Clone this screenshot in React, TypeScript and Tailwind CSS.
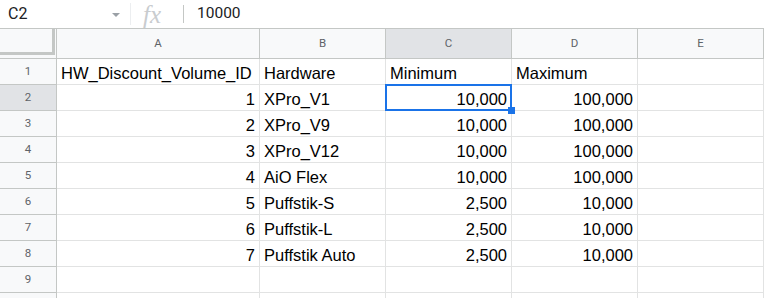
import React from 'react';

const cols = [
  { key: 'A', w: 'w-[203px]' },
  { key: 'B', w: 'w-[126px]' },
  { key: 'C', w: 'w-[126px]' },
  { key: 'D', w: 'w-[126px]' },
  { key: 'E', w: 'w-[126px]' },
];

type Cell = { v: string; num?: boolean };

const rows: Cell[][] = [
  [{ v: 'HW_Discount_Volume_ID' }, { v: 'Hardware' }, { v: 'Minimum' }, { v: 'Maximum' }, { v: '' }],
  [{ v: '1', num: true }, { v: 'XPro_V1' }, { v: '10,000', num: true }, { v: '100,000', num: true }, { v: '' }],
  [{ v: '2', num: true }, { v: 'XPro_V9' }, { v: '10,000', num: true }, { v: '100,000', num: true }, { v: '' }],
  [{ v: '3', num: true }, { v: 'XPro_V12' }, { v: '10,000', num: true }, { v: '100,000', num: true }, { v: '' }],
  [{ v: '4', num: true }, { v: 'AiO Flex' }, { v: '10,000', num: true }, { v: '100,000', num: true }, { v: '' }],
  [{ v: '5', num: true }, { v: 'Puffstik-S' }, { v: '2,500', num: true }, { v: '10,000', num: true }, { v: '' }],
  [{ v: '6', num: true }, { v: 'Puffstik-L' }, { v: '2,500', num: true }, { v: '10,000', num: true }, { v: '' }],
  [{ v: '7', num: true }, { v: 'Puffstik Auto' }, { v: '2,500', num: true }, { v: '10,000', num: true }, { v: '' }],
  [{ v: '' }, { v: '' }, { v: '' }, { v: '' }, { v: '' }],
  [{ v: '' }, { v: '' }, { v: '' }, { v: '' }, { v: '' }],
];

function FormulaBar() {
  return (
    <div className="flex h-[29px] items-center border-b border-[#c4c7c5] bg-white font-['Roboto',sans-serif] text-[#202124]">
      <div className="flex w-[130px] items-center pl-[8px] pr-[10px]">
        <span className="flex-1 text-[16px]">C2</span>
        <svg width="8" height="4" viewBox="0 0 8 4" className="mt-[2px]">
          <path d="M0 0 L8 0 L4 4 Z" fill="#9aa0a6" />
        </svg>
      </div>
      <div className="h-[22px] w-px bg-[#eceef0]" />
      <span className="ml-[12px] w-[28px] font-['Liberation_Serif',serif] text-[25px] italic leading-none text-[#c9cccf]">
        fx
      </span>
      <div className="ml-[12px] h-[18px] w-px bg-[#c4c7c5]" />
      <span className="ml-[13px] text-[15.5px]">10000</span>
    </div>
  );
}

function HeaderRow() {
  return (
    <div className="flex h-[30px] border-b border-[#c4c7c5] bg-[#f8f9fa] font-['Roboto',sans-serif] text-[11.5px] text-[#5f6368]">
      <div className="w-[57px] border-r border-[#c4c7c5]">
        <div className="h-[26px] w-[55px] border-b-[3px] border-r-[3px] border-[#c4c7c5]" />
      </div>
      {cols.map(c => (
        <div
          key={c.key}
          className={`${c.w} flex items-center justify-center border-r border-[#c4c7c5] ${c.key === 'C' ? 'bg-[#e1e3e6]' : ''}`}
        >
          {c.key}
        </div>
      ))}
    </div>
  );
}

export default function App() {
  return (
    <div className="h-[298px] w-[764px] overflow-hidden bg-white">
      <FormulaBar />
      <HeaderRow />
      {rows.map((row, ri) => {
        const selRow = ri === 1;
        return (
          <div key={ri} className="flex h-[26px]">
            <div
              className={`flex w-[57px] items-center justify-center border-b border-r border-[#c4c7c5] font-['Roboto',sans-serif] text-[11.5px] text-[#5f6368] ${selRow ? 'bg-[#e1e3e6]' : 'bg-[#f8f9fa]'}`}
            >
              {ri < 9 ? ri + 1 : ''}
            </div>
            {row.map((cell, ci) => {
              const selected = selRow && ci === 2;
              return (
                <div
                  key={ci}
                  className={`${cols[ci].w} relative flex items-end border-b border-r border-[#e2e3e3] px-[4px] pb-[1px] font-['Liberation_Sans',Arial,sans-serif] text-[16.5px] leading-[20px] text-black ${cell.num ? 'justify-end' : 'justify-start'} ${selected ? 'z-10' : ''}`}
                >
                  <span className="whitespace-nowrap">{cell.v}</span>
                  {selected && (
                    <>
                      <div className="pointer-events-none absolute -left-px -top-px bottom-[-1px] right-[-1px] border-2 border-[#1a73e8]" />
                      <div className="absolute bottom-[-4px] right-[-4px] h-[7px] w-[7px] bg-[#1a73e8]" />
                    </>
                  )}
                </div>
              );
            })}
          </div>
        );
      })}
    </div>
  );
}
